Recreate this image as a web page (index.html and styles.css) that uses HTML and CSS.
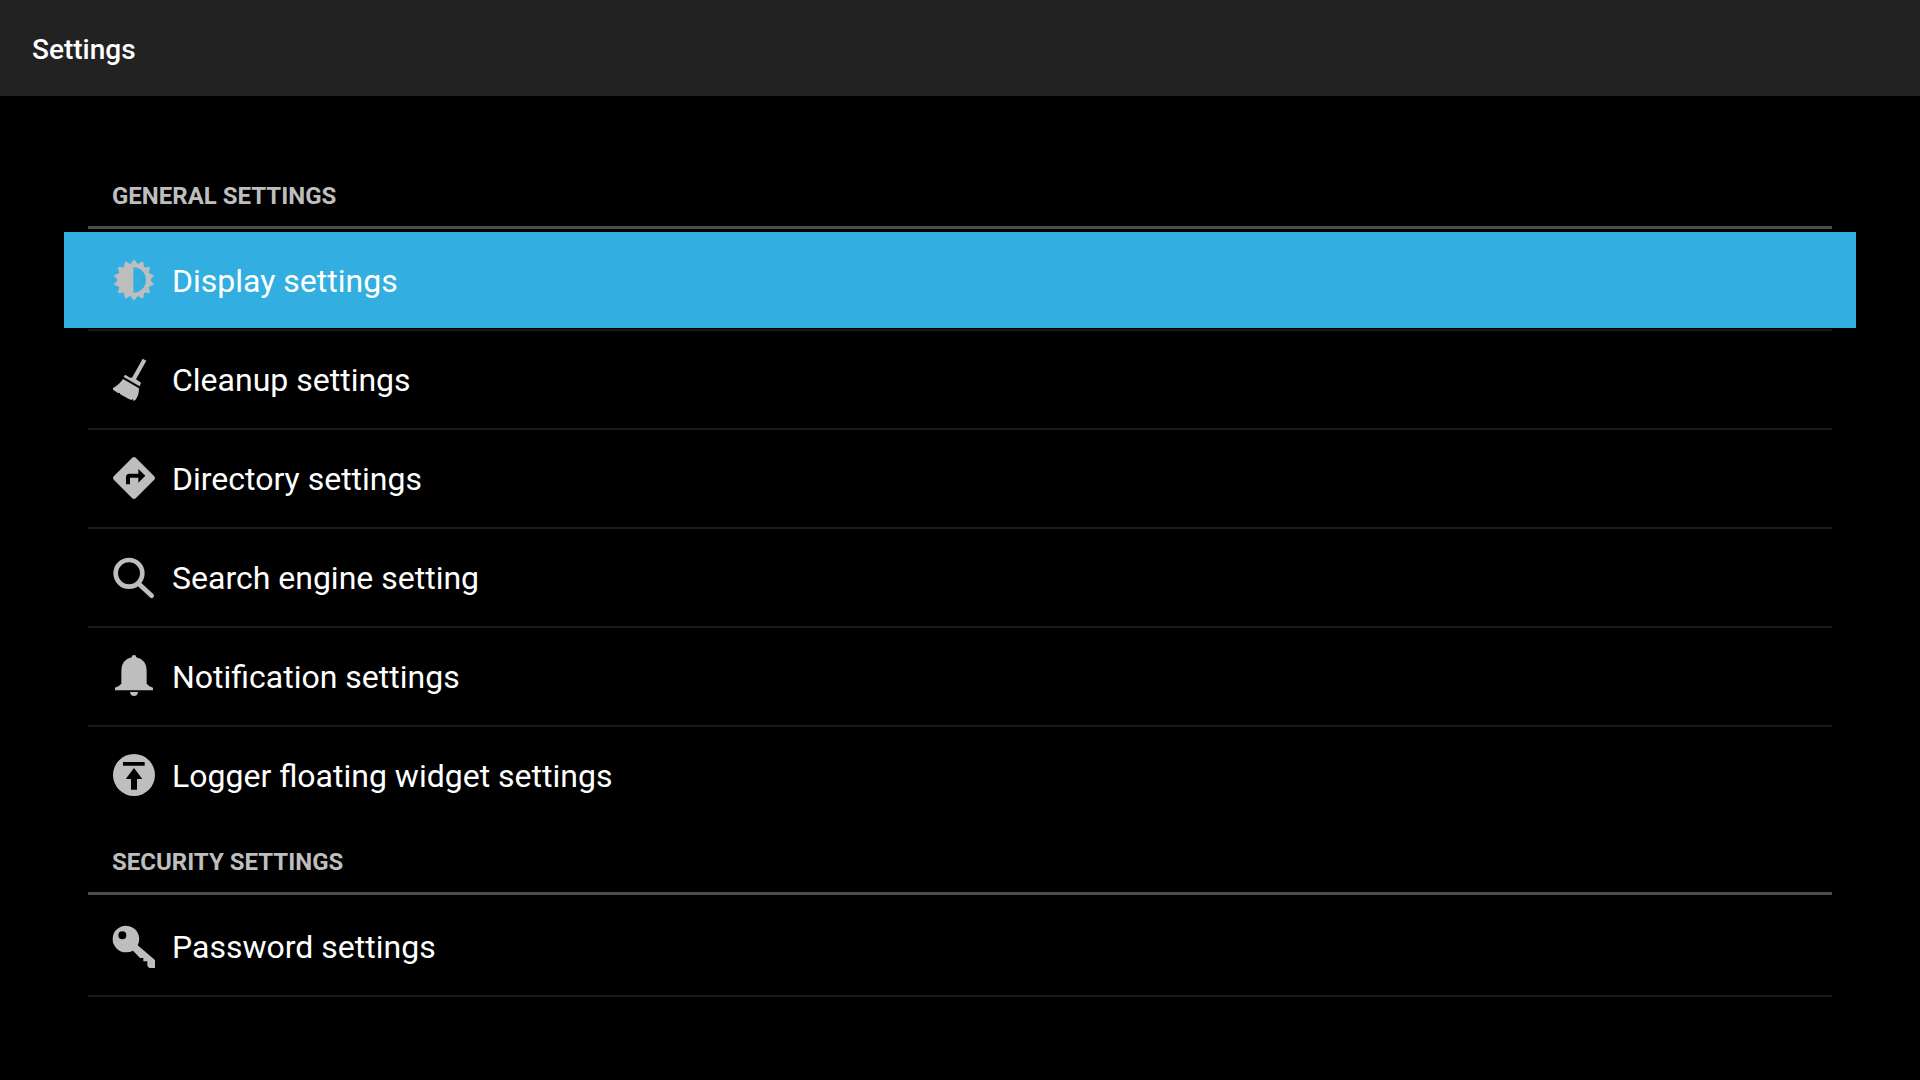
FILE: index.html
```
<!DOCTYPE html>
<html lang="en">
<head>
    <meta charset="UTF-8">
    <meta name="viewport" content="width=device-width, initial-scale=1.0">
    <title>Settings</title>
    <link rel="stylesheet" href="styles.css">
</head>
<body>
    <header class="action-bar">
        <h1 class="title">Settings</h1>
    </header>

    <main class="settings">
        <section class="category">
            <h2 class="category-title">General settings</h2>
            <ul class="list">
                <li class="item">
                    <a href="#display" class="row selected">
                        <svg class="icon" viewBox="0 0 126 126" aria-hidden="true">
                            <path fill-rule="evenodd" d="M63 1L73.9 15.2 89.9 7.1 93.5 24.7 111.5 24.3 107.2 41.7 123.4 49.2 112 63 123.4 76.8 107.2 84.3 111.5 101.7 93.5 101.3 89.9 118.9 73.9 110.8 63 125 52.1 110.8 36.1 118.9 32.5 101.3 14.5 101.7 18.8 84.3 2.6 76.8 14 63 2.6 49.2 18.8 41.7 14.5 24.3 32.5 24.7 36.1 7.1 52.1 15.2ZM61 25V101A38 38 0 0 0 61 25Z"/>
                        </svg>
                        <span class="label">Display settings</span>
                    </a>
                </li>
                <li class="item">
                    <a href="#cleanup" class="row">
                        <svg class="icon" viewBox="0 0 126 126" aria-hidden="true">
                            <path d="M89 2L100 8 69 64 84 74 80 85 32 57 36 50 53 60 58 58Z"/>
                            <path d="M30 63L78 91Q78 112 68 125L61 129 60 123 55 126 46 122 22 109 20 104 16 106 0 95V90Q17 82 30 63Z"/>
                        </svg>
                        <span class="label">Cleanup settings</span>
                    </a>
                </li>
                <li class="item">
                    <a href="#directory" class="row">
                        <svg class="icon" viewBox="0 0 126 126" aria-hidden="true">
                            <path fill-rule="evenodd" d="M57 3Q63-3 69 3L123 57Q129 63 123 69L69 123Q63 129 57 123L3 69Q-3 63 3 57ZM76 36V50H49Q39 51 39 61V82H51V62H76V77L97 56Z"/>
                        </svg>
                        <span class="label">Directory settings</span>
                    </a>
                </li>
                <li class="item">
                    <a href="#search" class="row">
                        <svg class="icon" viewBox="0 0 126 126" aria-hidden="true">
                            <circle class="line" cx="48" cy="52" r="40" stroke-width="14"/>
                            <path class="line" d="M78 84L116 119" stroke-width="14"/>
                        </svg>
                        <span class="label">Search engine setting</span>
                    </a>
                </li>
                <li class="item">
                    <a href="#notification" class="row">
                        <svg class="icon" viewBox="0 0 126 126" aria-hidden="true">
                            <path d="M56 7Q56 0 63 0T70 7Q101 14 101 48V86Q107 94 120 98V106H6V98Q19 94 25 86V48Q25 14 56 7ZM51 111H75Q74 123 63 123T51 111Z"/>
                        </svg>
                        <span class="label">Notification settings</span>
                    </a>
                </li>
                <li class="item">
                    <a href="#logger" class="row">
                        <svg class="icon" viewBox="0 0 126 126" aria-hidden="true">
                            <path fill-rule="evenodd" d="M63 0A63 63 0 1 0 63 126 63 63 0 1 0 63 0ZM30 24H95V35H30ZM63 42L88 75H72V107H54V75H38Z"/>
                        </svg>
                        <span class="label">Logger floating widget settings</span>
                    </a>
                </li>
            </ul>
        </section>

        <section class="category">
            <h2 class="category-title">Security settings</h2>
            <ul class="list">
                <li class="item">
                    <a href="#password" class="row">
                        <svg class="icon" viewBox="0 0 126 126" aria-hidden="true">
                            <path fill-rule="evenodd" d="M39 2A40 40 0 1 0 39 82 40 40 0 0 0 60 77L81 99H91V109H103V123L109 129H126V105L74 61A40 40 0 0 0 39 2ZM28 19A12 12 0 1 1 28 43 12 12 0 1 1 28 19Z"/>
                        </svg>
                        <span class="label">Password settings</span>
                    </a>
                </li>
            </ul>
        </section>
    </main>
</body>
</html>
```
FILE: styles.css
```
* {
    margin: 0;
    padding: 0;
    box-sizing: border-box;
}

body {
    font-family: Roboto, 'Noto Sans', sans-serif;
    background: #000;
    color: #fff;
    min-height: 100vh;
}

.action-bar {
    display: flex;
    align-items: center;
    height: 96px;
    padding: 4px 32px 0;
    background: #222;
}

.title {
    font-size: 28px;
    font-weight: 500;
    line-height: 40px;
}

.settings {
    padding: 64px 88px;
}

.category-title {
    height: 69px;
    padding: 20px 24px 0;
    border-bottom: 3px solid #4d4d4d;
    margin-bottom: 3px;
    font-size: 24px;
    font-weight: 700;
    line-height: 32px;
    text-transform: uppercase;
    color: #bebebe;
}

.list {
    list-style: none;
}

.item {
    padding-bottom: 1px;
    border-bottom: 2px solid #1a1a1a;
}

.category:not(:last-child) .item:last-child {
    border-bottom-color: transparent;
}

/* rows reach past the dividers so the highlight overhangs the list */
.row {
    display: flex;
    align-items: center;
    gap: 17px;
    height: 96px;
    margin: 0 -24px;
    padding: 0 49px;
    color: #fff;
    text-decoration: none;
}

.row.selected {
    background: #32aee0;
}

.icon {
    flex: none;
    width: 42px;
    height: 42px;
    fill: #bebebe;
    overflow: visible;
}

.line {
    fill: none;
    stroke: #bebebe;
    stroke-linecap: round;
}

.label {
    padding-top: 2px;
    font-size: 32px;
    line-height: 40px;
}
```
